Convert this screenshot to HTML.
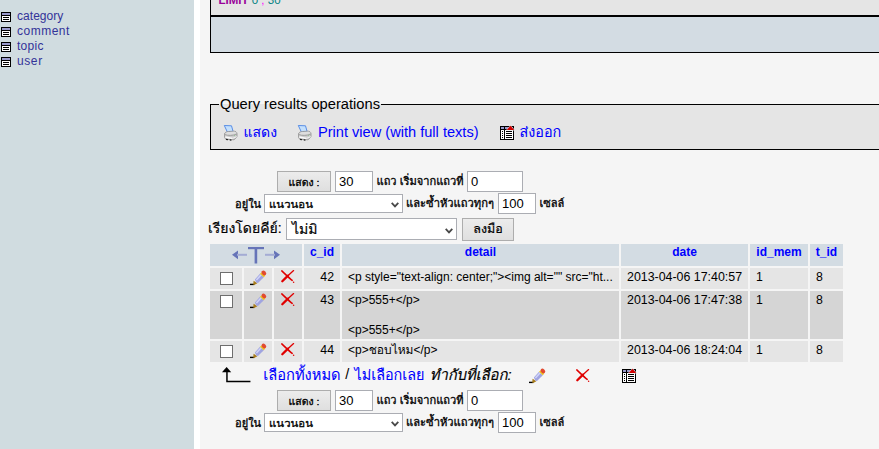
<!DOCTYPE html>
<html lang="th">
<head>
<meta charset="utf-8">
<title>phpMyAdmin</title>
<style>
html,body{margin:0;padding:0;}
body{width:879px;height:449px;overflow:hidden;background:#f5f5f5;position:relative;
  font-family:"Liberation Sans","Loma",sans-serif;font-size:14.5px;color:#000;}
.abs{position:absolute;white-space:nowrap;}
#side{position:absolute;left:0;top:0;width:194px;height:449px;background:#d0dce0;}
#gap{position:absolute;left:194px;top:0;width:6px;height:449px;background:#fff;}
.tbl{position:absolute;left:1px;width:10px;height:10px;}
.tl{position:absolute;left:17px;font-size:12px;line-height:15px;color:#333399;white-space:nowrap;}
a{color:#0000ff;text-decoration:none;}
.th{font-family:"Liberation Sans","Loma",sans-serif;-webkit-text-stroke:0.2px;}
a.th{-webkit-text-stroke:0.08px;}
/* boxes */
#box1{position:absolute;left:210px;top:-10px;width:700px;height:25px;background:#e5e5e5;border-left:1px solid #000;}
#line1{position:absolute;left:210px;top:15px;width:700px;height:2px;background:#000;}
#box2{position:absolute;left:210px;top:17px;width:700px;height:35px;background:#d3dce3;border-left:1px solid #000;border-bottom:1px solid #000;}
#fs{position:absolute;left:210px;top:104px;width:700px;height:44px;background:#e5e5e5;border:1px solid #000;box-sizing:content-box;}
#legend{position:absolute;left:219px;top:92px;height:20px;width:162px;background:linear-gradient(#f5f5f5 0,#f5f5f5 12px,#e5e5e5 12px);}
/* form controls */
.btn{position:absolute;box-sizing:border-box;background:#e1e1e1;border:1px solid #adadad;text-align:center;white-space:nowrap;}
.inp{position:absolute;box-sizing:border-box;background:#fff;border:1px solid #abadb3;white-space:nowrap;font-size:13px;}
.sel{position:absolute;box-sizing:border-box;background:#fff;border:1px solid #abadb3;white-space:nowrap;}
.nav{position:absolute;white-space:nowrap;font-size:11.1px;-webkit-text-stroke:0.3px;font-family:"Liberation Sans","Loma",sans-serif;}
/* table */
.c{position:absolute;box-sizing:border-box;white-space:nowrap;font-size:12.3px;}
.h{background:#d3dce3;top:244px;height:22px;font-weight:bold;color:#0000ff;text-align:center;}
.o{background:#e5e5e5;}
.e{background:#d5d5d5;}
.cb{position:absolute;width:13px;height:13px;box-sizing:border-box;border:1px solid #6e6e6e;background:#fff;left:220px;}
svg{position:absolute;overflow:visible;}
</style>
</head>
<body>
<div id="side">
<svg class="tbl" style="top:12px" width="10" height="10" viewBox="0 0 10 10" shape-rendering="crispEdges"><rect x="0" y="0" width="10" height="10" fill="#000"/><rect x="1" y="1" width="8" height="2" fill="#9999cc"/><rect x="1" y="4" width="8" height="5" fill="#fff"/><rect x="2" y="5" width="6" height="1" fill="#000"/><rect x="2" y="7" width="6" height="1" fill="#000"/></svg>
<a class="tl" style="top:9px;letter-spacing:0.04px">category</a>
<svg class="tbl" style="top:27px" width="10" height="10" viewBox="0 0 10 10" shape-rendering="crispEdges"><rect x="0" y="0" width="10" height="10" fill="#000"/><rect x="1" y="1" width="8" height="2" fill="#9999cc"/><rect x="1" y="4" width="8" height="5" fill="#fff"/><rect x="2" y="5" width="6" height="1" fill="#000"/><rect x="2" y="7" width="6" height="1" fill="#000"/></svg>
<a class="tl" style="top:24px;letter-spacing:0.5px">comment</a>
<svg class="tbl" style="top:42px" width="10" height="10" viewBox="0 0 10 10" shape-rendering="crispEdges"><rect x="0" y="0" width="10" height="10" fill="#000"/><rect x="1" y="1" width="8" height="2" fill="#9999cc"/><rect x="1" y="4" width="8" height="5" fill="#fff"/><rect x="2" y="5" width="6" height="1" fill="#000"/><rect x="2" y="7" width="6" height="1" fill="#000"/></svg>
<a class="tl" style="top:39px;letter-spacing:0.27px">topic</a>
<svg class="tbl" style="top:57px" width="10" height="10" viewBox="0 0 10 10" shape-rendering="crispEdges"><rect x="0" y="0" width="10" height="10" fill="#000"/><rect x="1" y="1" width="8" height="2" fill="#9999cc"/><rect x="1" y="4" width="8" height="5" fill="#fff"/><rect x="2" y="5" width="6" height="1" fill="#000"/><rect x="2" y="7" width="6" height="1" fill="#000"/></svg>
<a class="tl" style="top:54px;letter-spacing:0.6px">user</a>
</div><div id="gap"></div>
<div id="box1"></div><div id="line1"></div><div id="box2"></div>
<div class="abs" style="left:218.5px;top:-6px;font-size:11.5px;line-height:13px;"><b style="color:#990099">LIMIT</b> <span style="color:#008080">0</span> <span style="color:#ff00ff">,</span> <span style="color:#008080">30</span></div>
<div id="fs"></div><div id="legend"></div>
<div class="abs" style="left:220px;top:96px;font-size:14.7px;line-height:17px;">Query results operations</div>
<svg style="left:223px;top:124px" width="16" height="17" viewBox="0 0 16 17"><path d="M1.300 1.500l7.200 0.300 1.700 6-5.800 0.300z" fill="#c4e0fc" stroke="#4c84e4" stroke-width="0.900"/><g transform="translate(0.800,1.200) scale(0.930,0.960)"><path d="M0.800 9.200c0-1.600 2-2.400 4.400-2.600l5.400-.4c2 0 3.600 1 3.600 2.600v3.400l-3.200 3-9-.6-1.200-2z" fill="#cdcdcd" stroke="#949494" stroke-width="0.900"/><path d="M1.400 8.800c1-1.400 3-1.800 4.400-1.800l5-.3c1.600 0 2.600.6 2.900 1.500c-3.500 1.800-9.300 2-12.300.6z" fill="#dedede"/><path d="M1 9.600c3 1.600 9 1.600 13-.4" stroke="#989898" stroke-width="0.800" fill="none"/><path d="M1.600 12.300l7.800 1.500" stroke="#fafafa" stroke-width="1.600" fill="none"/><path d="M9.600 13.700l4.600-1.800" stroke="#f0f0f0" stroke-width="1.100" fill="none"/><path d="M2.400 14.700l2.200.4M6.400 15.300l1.800.2" stroke="#222" stroke-width="1.200"/><circle cx="11.600" cy="10.500" r="0.550" fill="#80c080"/></g></svg>
<a class="abs th" style="left:243.5px;top:122px;font-size:14px;line-height:20px;">แสดง</a>
<svg style="left:297px;top:124px" width="16" height="17" viewBox="0 0 16 17"><path d="M1.300 1.500l7.200 0.300 1.700 6-5.800 0.300z" fill="#c4e0fc" stroke="#4c84e4" stroke-width="0.900"/><g transform="translate(0.800,1.200) scale(0.930,0.960)"><path d="M0.800 9.200c0-1.600 2-2.400 4.400-2.600l5.400-.4c2 0 3.600 1 3.600 2.600v3.400l-3.200 3-9-.6-1.200-2z" fill="#cdcdcd" stroke="#949494" stroke-width="0.900"/><path d="M1.400 8.800c1-1.400 3-1.800 4.400-1.800l5-.3c1.600 0 2.600.6 2.900 1.500c-3.500 1.800-9.300 2-12.300.6z" fill="#dedede"/><path d="M1 9.600c3 1.600 9 1.600 13-.4" stroke="#989898" stroke-width="0.800" fill="none"/><path d="M1.600 12.300l7.800 1.500" stroke="#fafafa" stroke-width="1.600" fill="none"/><path d="M9.600 13.700l4.600-1.800" stroke="#f0f0f0" stroke-width="1.100" fill="none"/><path d="M2.400 14.700l2.200.4M6.400 15.300l1.800.2" stroke="#222" stroke-width="1.200"/><circle cx="11.600" cy="10.500" r="0.550" fill="#80c080"/></g></svg>
<a class="abs" style="left:318px;top:123.5px;font-size:14.6px;line-height:17px;">Print view (with full texts)</a>
<svg style="left:500px;top:125px" width="15" height="15" viewBox="0 0 15 15" shape-rendering="crispEdges"><rect x="0" y="1" width="14" height="14" fill="#000"/><rect x="1" y="2" width="12" height="12" fill="#fff"/><rect x="1" y="2" width="12" height="2" fill="#9999cc"/><rect x="4" y="2" width="1" height="12" fill="#000"/><rect x="1" y="4" width="12" height="1" fill="#000"/><rect x="2" y="6" width="1" height="1" fill="#000"/><rect x="2" y="8" width="1" height="1" fill="#000"/><rect x="2" y="10" width="1" height="1" fill="#000"/><rect x="2" y="12" width="1" height="1" fill="#000"/><rect x="6" y="6" width="6" height="1" fill="#000"/><rect x="6" y="8" width="6" height="1" fill="#000"/><rect x="6" y="10" width="6" height="1" fill="#000"/><rect x="6" y="12" width="6" height="1" fill="#000"/><path d="M5.7 5.6l4.8-5.4 4.8 5.4z" fill="#e5e5e5" shape-rendering="auto"/><path d="M6.7 5l3.8-4.2 3.8 4.2z" fill="#d00000" shape-rendering="auto"/></svg>
<a class="abs th" style="left:519.5px;top:122px;font-size:14.4px;line-height:20px;">ส่งออก</a>

<div class="btn" style="left:277px;top:171px;width:54px;height:21px;font-size:10.5px;line-height:21px;font-family:'Liberation Sans','Loma',sans-serif;background:linear-gradient(#ececec,#dfdfdf);-webkit-text-stroke:0.3px;"><span style="display:inline-block;transform:scaleY(.86);transform-origin:50% 78%">แสดง :</span></div>
<div class="inp" style="left:335px;top:171px;width:38px;height:21px;line-height:19px;padding-left:3px;">30</div>
<div class="nav" style="left:376.5px;top:172.5px;line-height:16px;">แถว เริ่มจากแถวที่</div>
<div class="inp" style="left:467px;top:171px;width:56px;height:21px;line-height:19px;padding-left:3px;">0</div>
<div class="nav" style="left:235px;top:195.5px;line-height:16px;">อยู่ใน</div>
<div class="sel" style="left:264px;top:194px;width:139px;height:19px;font-size:11.4px;line-height:18px;padding-left:4px;font-family:'Liberation Sans','Loma',sans-serif;-webkit-text-stroke:0.3px;"><span style="display:inline-block;transform:scaleY(.9);transform-origin:50% 75%">แนวนอน</span><svg style="left:126px;top:6.5px" width="8" height="6" viewBox="0 0 8 6"><path d="M0.7 0.9l3.3 3.5 3.3-3.5" stroke="#484848" stroke-width="1.8" fill="none"/></svg></div>
<div class="nav" style="left:406px;top:194.5px;line-height:16px;font-size:11.2px;">และซ้ำหัวแถวทุกๆ</div>
<div class="inp" style="left:498px;top:193px;width:38px;height:21px;line-height:19px;padding-left:3px;">100</div>
<div class="nav" style="left:539.5px;top:194.5px;line-height:16px;">เซลล์</div>

<div class="abs th" style="left:208px;top:217.5px;font-size:14px;line-height:20px;">เรียงโดยคีย์:</div>
<div class="sel th" style="left:286px;top:218px;width:171px;height:22px;font-size:14px;line-height:20px;padding-left:5px;">ไม่มิ<svg style="left:158px;top:8.5px" width="8" height="6" viewBox="0 0 8 6"><path d="M0.7 0.9l3.3 3.5 3.3-3.5" stroke="#484848" stroke-width="1.8" fill="none"/></svg></div>
<div class="btn th" style="left:462px;top:217.5px;width:52px;height:23px;font-size:12.5px;line-height:21px;background:linear-gradient(#ececec,#dfdfdf);">ลงมือ</div>
<div class="c h" style="left:210px;width:92px;"></div>
<svg style="left:232px;top:246px" width="48" height="18" viewBox="0 0 48 18"><path d="M0 8.8l6-4.4v8.8z" fill="#6674b8"/><rect x="5" y="7.8" width="10" height="2" fill="#a4acd4"/><path d="M48 8.8l-6-4.4v8.8z" fill="#6674b8"/><rect x="33" y="7.8" width="10" height="2" fill="#a4acd4"/><rect x="16" y="1" width="16" height="2.2" fill="#6674b8"/><rect x="22.6" y="1" width="2.6" height="16.5" fill="#6674b8"/></svg>
<div class="c h" style="left:304px;width:36px;line-height:17px;padding-top:0.3px;font-size:12px;">c_id</div>
<div class="c h" style="left:342px;width:277px;line-height:17px;padding-top:0.3px;font-size:12px;">detail</div>
<div class="c h" style="left:621px;width:127px;line-height:17px;padding-top:0.3px;font-size:12px;">date</div>
<div class="c h" style="left:750px;width:58px;line-height:17px;padding-top:0.3px;font-size:12px;">id_mem</div>
<div class="c h" style="left:810px;width:33px;line-height:17px;padding-top:0.3px;font-size:12px;">t_id</div>
<div class="c o" style="left:210px;top:268px;width:32px;height:21px;"></div>
<div class="c o" style="left:244px;top:268px;width:28px;height:21px;"></div>
<div class="c o" style="left:274px;top:268px;width:28px;height:21px;"></div>
<div class="cb" style="top:272px"></div>
<svg style="left:250px;top:269.6px" width="17" height="16" viewBox="0 0 17 16"><path d="M0 14.4h4.4" stroke="#000" stroke-width="1.4" fill="none"/><path d="M3.6 10.8l3.8 2.4-3.2 1.8-1-.4z" fill="#a87c1c"/><path d="M4.9 9.6l5.1-5.8 3.8 3.4-5.8 5.8-1.6-.2z" fill="#a0a4e0"/><path d="M6.4 9.9l5-5.4" stroke="#d0d4f8" stroke-width="1.5" fill="none"/><path d="M10 3.8l1.5-1.4 3.7 3.3-1.4 1.5z" fill="#ecc41c"/><ellipse cx="13.9" cy="3" rx="2.6" ry="2" transform="rotate(42 13.9 3)" fill="#e24a30"/></svg>
<svg style="left:280.7px;top:270.3px" width="14" height="13" viewBox="0 0 14 13"><path d="M0.8 0.9C3.5 3.4 8 8 11.2 10.4" stroke="#e00000" stroke-width="1.5" stroke-linecap="round" fill="none"/><path d="M12.6 0.6L6.6 6" stroke="#e00000" stroke-width="1.3" stroke-linecap="round" fill="none"/><path d="M7 5.6L1.3 11.2" stroke="#e00000" stroke-width="2.3" stroke-linecap="round" fill="none"/><circle cx="12.6" cy="12.2" r="0.75" fill="#e00000"/></svg>
<div class="c o" style="left:304px;top:268px;width:36px;height:21px;line-height:15px;padding:2px 6px 0 0;text-align:right;">42</div>
<div class="c o" style="left:342px;top:268px;width:277px;height:21px;line-height:15px;padding:2px 0 0 6px;font-size:12px;">&lt;p style="text-align: center;"&gt;&lt;img alt="" src="ht...</div>
<div class="c o" style="left:621px;top:268px;width:127px;height:21px;line-height:15px;padding:2px 0 0 6px;font-size:12.4px;">2013-04-06 17:40:57</div>
<div class="c o" style="left:750px;top:268px;width:58px;height:21px;line-height:15px;padding:2px 0 0 6px;">1</div>
<div class="c o" style="left:810px;top:268px;width:33px;height:21px;line-height:15px;padding:2px 0 0 6px;">8</div>
<div class="c e" style="left:210px;top:291px;width:32px;height:48px;"></div>
<div class="c e" style="left:244px;top:291px;width:28px;height:48px;"></div>
<div class="c e" style="left:274px;top:291px;width:28px;height:48px;"></div>
<div class="cb" style="top:295px"></div>
<svg style="left:250px;top:292.6px" width="17" height="16" viewBox="0 0 17 16"><path d="M0 14.4h4.4" stroke="#000" stroke-width="1.4" fill="none"/><path d="M3.6 10.8l3.8 2.4-3.2 1.8-1-.4z" fill="#a87c1c"/><path d="M4.9 9.6l5.1-5.8 3.8 3.4-5.8 5.8-1.6-.2z" fill="#a0a4e0"/><path d="M6.4 9.9l5-5.4" stroke="#d0d4f8" stroke-width="1.5" fill="none"/><path d="M10 3.8l1.5-1.4 3.7 3.3-1.4 1.5z" fill="#ecc41c"/><ellipse cx="13.9" cy="3" rx="2.6" ry="2" transform="rotate(42 13.9 3)" fill="#e24a30"/></svg>
<svg style="left:280.7px;top:293.3px" width="14" height="13" viewBox="0 0 14 13"><path d="M0.8 0.9C3.5 3.4 8 8 11.2 10.4" stroke="#e00000" stroke-width="1.5" stroke-linecap="round" fill="none"/><path d="M12.6 0.6L6.6 6" stroke="#e00000" stroke-width="1.3" stroke-linecap="round" fill="none"/><path d="M7 5.6L1.3 11.2" stroke="#e00000" stroke-width="2.3" stroke-linecap="round" fill="none"/><circle cx="12.6" cy="12.2" r="0.75" fill="#e00000"/></svg>
<div class="c e" style="left:304px;top:291px;width:36px;height:48px;line-height:15px;padding:2px 6px 0 0;text-align:right;">43</div>
<div class="c e" style="left:342px;top:291px;width:277px;height:48px;line-height:15px;padding:2px 0 0 6px;font-size:12px;">&lt;p&gt;555+&lt;/p&gt;<br><br>&lt;p&gt;555+&lt;/p&gt;</div>
<div class="c e" style="left:621px;top:291px;width:127px;height:48px;line-height:15px;padding:2px 0 0 6px;font-size:12.4px;">2013-04-06 17:47:38</div>
<div class="c e" style="left:750px;top:291px;width:58px;height:48px;line-height:15px;padding:2px 0 0 6px;">1</div>
<div class="c e" style="left:810px;top:291px;width:33px;height:48px;line-height:15px;padding:2px 0 0 6px;">8</div>
<div class="c o" style="left:210px;top:341px;width:32px;height:21px;"></div>
<div class="c o" style="left:244px;top:341px;width:28px;height:21px;"></div>
<div class="c o" style="left:274px;top:341px;width:28px;height:21px;"></div>
<div class="cb" style="top:345px"></div>
<svg style="left:250px;top:342.6px" width="17" height="16" viewBox="0 0 17 16"><path d="M0 14.4h4.4" stroke="#000" stroke-width="1.4" fill="none"/><path d="M3.6 10.8l3.8 2.4-3.2 1.8-1-.4z" fill="#a87c1c"/><path d="M4.9 9.6l5.1-5.8 3.8 3.4-5.8 5.8-1.6-.2z" fill="#a0a4e0"/><path d="M6.4 9.9l5-5.4" stroke="#d0d4f8" stroke-width="1.5" fill="none"/><path d="M10 3.8l1.5-1.4 3.7 3.3-1.4 1.5z" fill="#ecc41c"/><ellipse cx="13.9" cy="3" rx="2.6" ry="2" transform="rotate(42 13.9 3)" fill="#e24a30"/></svg>
<svg style="left:280.7px;top:343.3px" width="14" height="13" viewBox="0 0 14 13"><path d="M0.8 0.9C3.5 3.4 8 8 11.2 10.4" stroke="#e00000" stroke-width="1.5" stroke-linecap="round" fill="none"/><path d="M12.6 0.6L6.6 6" stroke="#e00000" stroke-width="1.3" stroke-linecap="round" fill="none"/><path d="M7 5.6L1.3 11.2" stroke="#e00000" stroke-width="2.3" stroke-linecap="round" fill="none"/><circle cx="12.6" cy="12.2" r="0.75" fill="#e00000"/></svg>
<div class="c o" style="left:304px;top:341px;width:36px;height:21px;line-height:15px;padding:2px 6px 0 0;text-align:right;">44</div>
<div class="c o" style="left:342px;top:341px;width:277px;height:21px;line-height:15px;padding:2px 0 0 6px;font-size:12px;">&lt;p&gt;ชอบไหม&lt;/p&gt;</div>
<div class="c o" style="left:621px;top:341px;width:127px;height:21px;line-height:15px;padding:2px 0 0 6px;font-size:12.4px;">2013-04-06 18:24:04</div>
<div class="c o" style="left:750px;top:341px;width:58px;height:21px;line-height:15px;padding:2px 0 0 6px;">1</div>
<div class="c o" style="left:810px;top:341px;width:33px;height:21px;line-height:15px;padding:2px 0 0 6px;">8</div>
<svg style="left:221.8px;top:366.8px" width="30" height="16" viewBox="0 0 30 16"><path d="M0 5.2L4.6 0l4.6 5.2z" fill="#000"/><path d="M4.95 5v9.4h23.5" stroke="#000" stroke-width="1.5" fill="none"/></svg>
<a class="abs th" style="left:263.3px;top:364.8px;font-size:14.65px;line-height:20px;">เลือกทั้งหมด</a>
<div class="abs" style="left:345.3px;top:366.3px;font-size:14.5px;line-height:17px;">/</div>
<a class="abs th" style="left:354.5px;top:364.8px;font-size:14.4px;line-height:20px;">ไม่เลือกเลย</a>
<i class="abs th" style="left:430px;top:365px;font-size:14.7px;line-height:20px;">ทำกับที่เลือก:</i>
<svg style="left:529px;top:368px" width="17" height="16" viewBox="0 0 17 16"><path d="M0 14.4h4.4" stroke="#000" stroke-width="1.4" fill="none"/><path d="M3.6 10.8l3.8 2.4-3.2 1.8-1-.4z" fill="#a87c1c"/><path d="M4.9 9.6l5.1-5.8 3.8 3.4-5.8 5.8-1.6-.2z" fill="#a0a4e0"/><path d="M6.4 9.9l5-5.4" stroke="#d0d4f8" stroke-width="1.5" fill="none"/><path d="M10 3.8l1.5-1.4 3.7 3.3-1.4 1.5z" fill="#ecc41c"/><ellipse cx="13.9" cy="3" rx="2.6" ry="2" transform="rotate(42 13.9 3)" fill="#e24a30"/></svg>
<svg style="left:576px;top:369px" width="14" height="13" viewBox="0 0 14 13"><path d="M0.8 0.9C3.5 3.4 8 8 11.2 10.4" stroke="#e00000" stroke-width="1.5" stroke-linecap="round" fill="none"/><path d="M12.6 0.6L6.6 6" stroke="#e00000" stroke-width="1.3" stroke-linecap="round" fill="none"/><path d="M7 5.6L1.3 11.2" stroke="#e00000" stroke-width="2.3" stroke-linecap="round" fill="none"/><circle cx="12.6" cy="12.2" r="0.75" fill="#e00000"/></svg>
<svg style="left:622px;top:368px" width="15" height="15" viewBox="0 0 15 15" shape-rendering="crispEdges"><rect x="0" y="1" width="14" height="14" fill="#000"/><rect x="1" y="2" width="12" height="12" fill="#fff"/><rect x="1" y="2" width="12" height="2" fill="#9999cc"/><rect x="4" y="2" width="1" height="12" fill="#000"/><rect x="1" y="4" width="12" height="1" fill="#000"/><rect x="2" y="6" width="1" height="1" fill="#000"/><rect x="2" y="8" width="1" height="1" fill="#000"/><rect x="2" y="10" width="1" height="1" fill="#000"/><rect x="2" y="12" width="1" height="1" fill="#000"/><rect x="6" y="6" width="6" height="1" fill="#000"/><rect x="6" y="8" width="6" height="1" fill="#000"/><rect x="6" y="10" width="6" height="1" fill="#000"/><rect x="6" y="12" width="6" height="1" fill="#000"/><path d="M5.7 5.6l4.8-5.4 4.8 5.4z" fill="#e5e5e5" shape-rendering="auto"/><path d="M6.7 5l3.8-4.2 3.8 4.2z" fill="#d00000" shape-rendering="auto"/></svg>

<div class="btn" style="left:277px;top:390px;width:54px;height:21px;font-size:10.5px;line-height:21px;font-family:'Liberation Sans','Loma',sans-serif;background:linear-gradient(#ececec,#dfdfdf);-webkit-text-stroke:0.3px;"><span style="display:inline-block;transform:scaleY(.86);transform-origin:50% 78%">แสดง :</span></div>
<div class="inp" style="left:335px;top:390px;width:38px;height:21px;line-height:19px;padding-left:3px;">30</div>
<div class="nav" style="left:376.5px;top:391.5px;line-height:16px;">แถว เริ่มจากแถวที่</div>
<div class="inp" style="left:467px;top:390px;width:56px;height:21px;line-height:19px;padding-left:3px;">0</div>
<div class="nav" style="left:235px;top:414.5px;line-height:16px;">อยู่ใน</div>
<div class="sel" style="left:264px;top:413px;width:139px;height:19px;font-size:11.4px;line-height:18px;padding-left:4px;font-family:'Liberation Sans','Loma',sans-serif;-webkit-text-stroke:0.3px;"><span style="display:inline-block;transform:scaleY(.9);transform-origin:50% 75%">แนวนอน</span><svg style="left:126px;top:6.5px" width="8" height="6" viewBox="0 0 8 6"><path d="M0.7 0.9l3.3 3.5 3.3-3.5" stroke="#484848" stroke-width="1.8" fill="none"/></svg></div>
<div class="nav" style="left:406px;top:413.5px;line-height:16px;font-size:11.2px;">และซ้ำหัวแถวทุกๆ</div>
<div class="inp" style="left:498px;top:412px;width:38px;height:21px;line-height:19px;padding-left:3px;">100</div>
<div class="nav" style="left:539.5px;top:413.5px;line-height:16px;">เซลล์</div>

</body>
</html>
